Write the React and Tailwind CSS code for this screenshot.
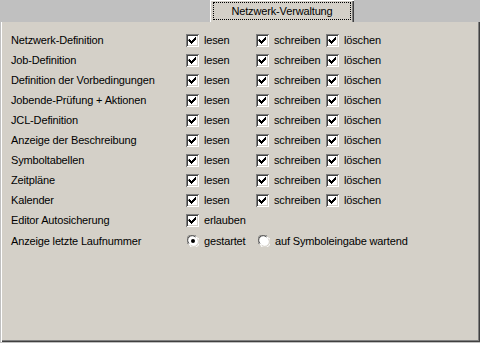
const rows = [
  'Netzwerk-Definition',
  'Job-Definition',
  'Definition der Vorbedingungen',
  'Jobende-Prüfung + Aktionen',
  'JCL-Definition',
  'Anzeige der Beschreibung',
  'Symboltabellen',
  'Zeitpläne',
  'Kalender',
]

function Check() {
  return (
    <span className="w-[13px] h-[13px] bg-white shrink-0 relative shadow-[inset_1px_1px_#808080,inset_-1px_-1px_#ffffff,inset_2px_2px_#404040,inset_-2px_-2px_#d4d0c8]">
      <svg width="13" height="13" viewBox="0 0 13 13" className="absolute left-0 top-0">
        <path d="M3 5h1v1h1v1h1v-1h1v-1h1v-1h1v-1h1v3h-1v1h-1v1h-1v1h-1v1h-1v-1h-1v-1h-1v-1h-1z" fill="#000" />
      </svg>
    </span>
  )
}

function Radio({ on }) {
  return (
    <span className="w-[12px] h-[12px] shrink-0 relative">
      <svg width="12" height="12" viewBox="0 0 12 12" className="absolute left-0 top-0">
        <circle cx="6" cy="6" r="5.5" fill="#fff" stroke="none" />
        <path d="M1.2 9.2A5.4 5.4 0 0 1 9.2 1.2" stroke="#808080" strokeWidth="1" fill="none" />
        <path d="M2 8.5A4.4 4.4 0 0 1 8.5 2" stroke="#404040" strokeWidth="1" fill="none" />
        <path d="M10.8 2.8A5.4 5.4 0 0 1 2.8 10.8" stroke="#ffffff" strokeWidth="1" fill="none" />
        <path d="M10 3.5A4.4 4.4 0 0 1 3.5 10" stroke="#d4d0c8" strokeWidth="1" fill="none" />
        {on && <circle cx="6" cy="6" r="2" fill="#000" />}
      </svg>
    </span>
  )
}

function Opt({ children, width }) {
  return (
    <div className={`flex items-center gap-[5px] ${width}`}>
      <Check />
      <span>{children}</span>
    </div>
  )
}

export default function App() {
  return (
    <div className="w-[480px] h-[343px] bg-[#c0c0c0] flex flex-col text-[11px] tracking-[-0.15px] text-black" style={{ fontFamily: '"Liberation Sans", Arial, sans-serif' }}>
      <div className="h-[22px] flex shrink-0">
        <div className="w-[210px]" />
        <div className="w-[144px] h-[22px] bg-[#d4d0c8] p-[1px_3px_2px_2px] border-l border-t border-white shadow-[inset_-1px_0_#404040,inset_-2px_0_#808080]">
          <div className="h-full border border-dotted border-black flex items-center justify-center">
            Netzwerk-Verwaltung
          </div>
        </div>
      </div>
      <div className="flex-1 bg-[#d4d0c8] ml-px mb-px shadow-[inset_1px_0_#ffffff,inset_-1px_-1px_#404040,inset_-2px_-2px_#808080] pt-[8px] pl-[10px]">
        {rows.map((r) => (
          <div key={r} className="h-[20px] flex items-center">
            <div className="w-[175px]">{r}</div>
            <Opt width="w-[70px]">lesen</Opt>
            <Opt width="w-[70px]">schreiben</Opt>
            <Opt width="">löschen</Opt>
          </div>
        ))}
        <div className="h-[20px] flex items-center">
          <div className="w-[175px]">Editor Autosicherung</div>
          <Opt width="">erlauben</Opt>
        </div>
        <div className="h-[22px] flex items-center">
          <div className="w-[176px]">Anzeige letzte Laufnummer</div>
          <div className="flex items-center gap-[5px] w-[71px]">
            <Radio on />
            <span>gestartet</span>
          </div>
          <div className="flex items-center gap-[5px]">
            <Radio />
            <span>auf Symboleingabe wartend</span>
          </div>
        </div>
      </div>
    </div>
  )
}
